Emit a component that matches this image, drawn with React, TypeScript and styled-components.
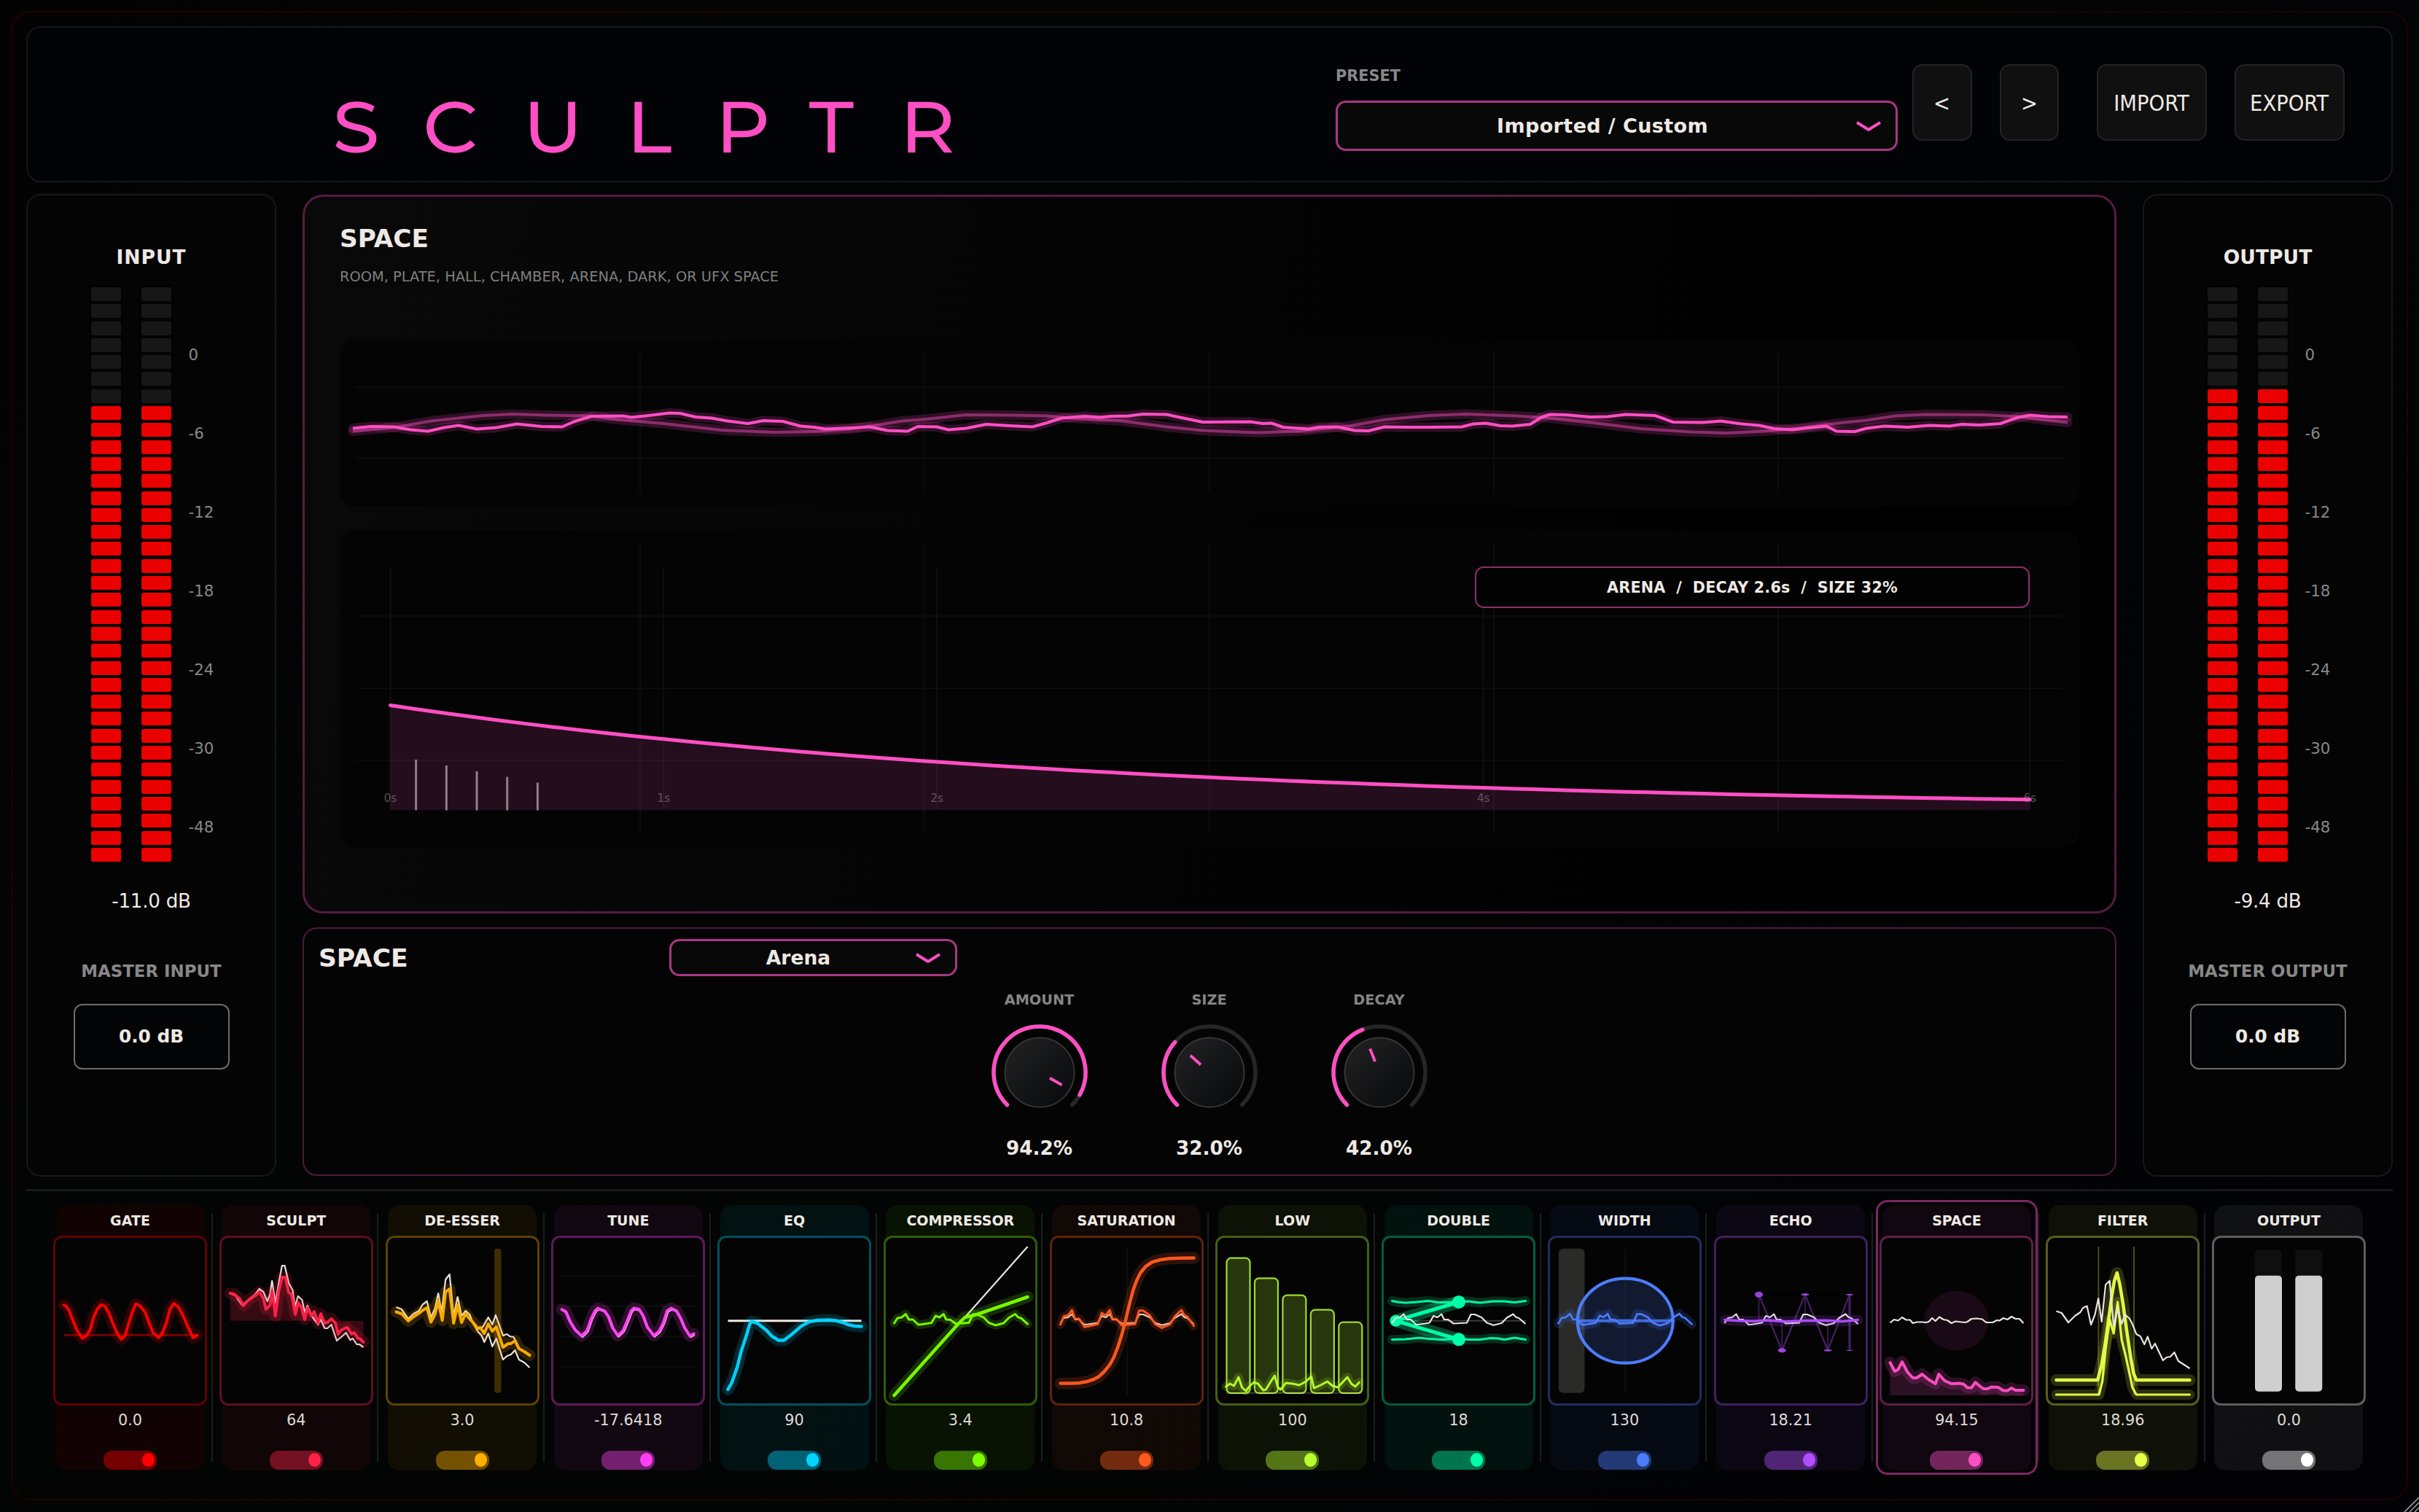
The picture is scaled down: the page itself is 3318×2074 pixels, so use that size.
import React from "react";
import styled, { createGlobalStyle } from "styled-components";

const PINK = "#ff4fc4";
const CREAM = "#eee9e4";
const GREY = "#888888";

const Global = createGlobalStyle`
  *, *::before, *::after { box-sizing: border-box; }
  html, body { margin: 0; padding: 0; background: #030303; }
  body {
    width: 3318px;
    height: 2074px;
    overflow: hidden;
    font-family: Verdana, "DejaVu Sans", sans-serif;
    color: ${CREAM};
  }
  svg { display: block; }
`;

const Window = styled.main`
  position: relative;
  width: 3318px;
  height: 2074px;
  padding: 36px;
  background: linear-gradient(120deg, #030303, #030504 45%, #020205);
  overflow: hidden;
`;

const Frame = styled.div`
  position: absolute;
  left: 15px;
  top: 15px;
  width: 3288px;
  height: 2043px;
  border: 2px solid #200304;
  border-radius: 28px;
  pointer-events: none;
`;

const Label = styled.div<{ size: number; h: number; bold?: boolean; color?: string; ls?: number; mt?: number }>`
  height: ${(p) => p.h}px;
  line-height: ${(p) => p.h}px;
  margin-top: ${(p) => p.mt ?? 0}px;
  font-size: ${(p) => p.size}px;
  font-weight: ${(p) => (p.bold ? 700 : 400)};
  letter-spacing: ${(p) => p.ls ?? 0}px;
  color: ${(p) => p.color ?? CREAM};
  white-space: pre;
`;

/* ---------- header ---------- */

const Header = styled.header`
  display: flex;
  width: 3246px;
  height: 214px;
  border: 2px solid #171819;
  border-radius: 20px;
  background: #020306;
`;

const Logo = styled.h1`
  display: flex;
  width: 1794px;
  height: 100px;
  margin: 87px 0 0;
  padding-left: 419px;
  font-family: Montserrat, Lato, sans-serif;
  font-weight: 400;
  font-size: 95.5px;
  line-height: 99px;
  color: ${PINK};
  -webkit-text-stroke: 2.4px ${PINK};
`;

const LogoLetter = styled.span<{ w: number }>`
  flex: none;
  width: ${(p) => p.w}px;
  transform: scaleX(1.07);
  transform-origin: left;
`;

const PresetBlock = styled.div`
  width: 771px;
  padding-top: 52px;
`;

const Select = styled.div<{ w: number; h: number; shift: number; mt?: number }>`
  display: flex;
  align-items: center;
  justify-content: center;
  position: relative;
  width: ${(p) => p.w}px;
  height: ${(p) => p.h}px;
  margin-top: ${(p) => p.mt ?? 0}px;
  padding: 1px ${(p) => p.shift}px 0 0;
  border: 3px solid #a93785;
  border-radius: 14px;
  background: #080808;
`;

const Chevron = styled.svg`
  position: absolute;
  right: 19px;
  top: 50%;
  transform: translateY(-50%);
`;

const ButtonRow = styled.div`
  display: flex;
  padding: 50px 0 0 19.5px;
`;

const Button = styled.button<{ w: number; ml?: number }>`
  width: ${(p) => p.w}px;
  height: 105px;
  margin: 0 0 0 ${(p) => p.ml ?? 0}px;
  padding: 2px 0 0;
  border: 2px solid #232323;
  border-radius: 14px;
  background: #101010;
  color: ${CREAM};
  font: 400 30.5px "DejaVu Sans Condensed", "DejaVu Sans", sans-serif;
`;

/* ---------- middle ---------- */

const Middle = styled.div`
  display: flex;
  margin-top: 16px;
  height: 1348px;
`;

const SidePanel = styled.section`
  display: flex;
  flex-direction: column;
  align-items: center;
  width: 343px;
  height: 1348px;
  border: 2px solid #181818;
  border-radius: 20px;
  background: #040404;
`;

const MeterRow = styled.div`
  display: flex;
  align-self: stretch;
  height: 790px;
  margin-top: 21px;
  padding-left: 86.5px;
`;

const MeterColumn = styled.div`
  display: flex;
  flex-direction: column;
  gap: 4.31px;
  width: 41.5px;
  margin-right: 27.5px;
  box-shadow: 0 0 0 3px #020203;
`;

const Segment = styled.div<{ on: boolean }>`
  height: 19px;
  border-radius: 3px;
  background: ${(p) => (p.on ? "#eb0000" : "#171717")};
`;

const Scale = styled.div`
  display: flex;
  flex-direction: column;
  padding-top: 38.5px;
  margin-left: -4px;
`;

const GainBox = styled.div`
  display: flex;
  align-items: center;
  justify-content: center;
  width: 214px;
  height: 90px;
  margin-top: 31px;
  border: 2px solid #6c6c6c;
  border-radius: 12px;
  background: #030406;
`;

const Center = styled.div`
  display: flex;
  flex-direction: column;
  width: 2488px;
  margin: 1px 36px 0;
`;

const Display = styled.section`
  height: 986px;
  padding: 32px 48px 0;
  border: 3px solid #571b44;
  border-radius: 28px;
  background: linear-gradient(100deg, #090909, #040404 45%, #000 85%);
`;

const Plot = styled.div<{ h: number; mt: number }>`
  height: ${(p) => p.h}px;
  margin-top: ${(p) => p.mt}px;
  border-radius: 20px;
  background: #040404;
`;

const PlotStack = styled(Plot)`
  position: relative;
`;

const Badge = styled.div`
  position: absolute;
  left: 1557px;
  top: 50px;
  width: 761px;
  height: 57px;
  display: flex;
  align-items: center;
  justify-content: center;
  border: 2px solid #8a2e6d;
  border-radius: 12px;
  background: #020202;
`;

const Controls = styled.section`
  height: 341px;
  margin-top: 19px;
  border: 2px solid #50193f;
  border-radius: 20px;
  background: #040404;
`;

const ControlsHead = styled.div`
  display: flex;
  align-items: center;
  height: 51px;
  margin-top: 14px;
  padding-left: 20px;
`;

const HeadTitle = styled.div`
  width: 481px;
  padding-top: 1px;
`;

const Knobs = styled.div`
  display: flex;
  justify-content: center;
  margin-top: 20px;
  padding-right: 1px;
`;

const KnobCell = styled.div`
  display: flex;
  flex-direction: column;
  align-items: center;
  width: 233px;
`;

const Dial = styled.svg`
  margin-top: 18px;
`;

/* ---------- module strip ---------- */

const Strip = styled.div`
  display: flex;
  margin-top: 17px;
  padding: 12px 0 0 31.5px;
  border-top: 3px solid #191919;
`;

const Slot = styled.div`
  display: flex;
  align-items: center;
  width: 227.77px;
  height: 377px;
`;

const Divider = styled.div`
  width: 2px;
  height: 341px;
  background: #1d1d1d;
`;

const Highlight = styled.div<{ color: string; on: boolean }>`
  display: flex;
  align-items: center;
  justify-content: center;
  width: 222px;
  height: 377px;
  border-radius: 16px;
  border: 3px solid ${(p) => (p.on ? p.color + "7c" : "transparent")};
`;

const Card = styled.div<{ color: string }>`
  display: flex;
  flex-direction: column;
  align-items: center;
  width: 204px;
  height: 364px;
  border-radius: 16px;
  background: ${(p) => p.color}0f;
`;

const Preview = styled.div<{ color: string }>`
  width: 211px;
  height: 233px;
  margin-top: 7px;
  border: 3px solid ${(p) => p.color}5c;
  border-radius: 12px;
  background: #040404;
  flex: none;
  overflow: hidden;
`;

const PreviewArt = styled.svg`
  margin: -3px;
`;

const Toggle = styled.div<{ color: string }>`
  display: flex;
  align-items: center;
  justify-content: flex-end;
  width: 73px;
  height: 26px;
  margin-top: 28px;
  padding-right: 3px;
  border-radius: 12px;
  background: ${(p) => p.color}6b;
`;

const Thumb = styled.div<{ color: string }>`
  width: 17px;
  height: 19px;
  border-radius: 50%;
  background: ${(p) => p.color};
`;

const Grip = styled.svg`
  position: absolute;
  right: 0;
  bottom: 0;
`;

/* ---------- drawing helpers ---------- */

type Pt = [number, number];
const parse = (s: string): Pt[] =>
  s.trim().split(/\s+/).map((p) => p.split(",").map(Number) as Pt);
const PX = (u: number) => 14.5 + 1.83 * u;
const line = (pts: Pt[]) => pts.map(([x, y]) => `${x},${y}`).join(" ");
const scope = (s: string) => line(parse(s).map(([u, y]) => [PX(u), y]));

const Glow = ({ pts, color, w = 4, glow = 16 }: { pts: string; color: string; w?: number; glow?: number }) => (
  <g fill="none" stroke={color} strokeLinejoin="round" strokeLinecap="round">
    <polyline points={pts} strokeWidth={glow} opacity={0.17} />
    <polyline points={pts} strokeWidth={w} opacity={0.97} />
  </g>
);
const Thin = ({ pts, w = 2.2 }: { pts: string; w?: number }) => (
  <polyline points={pts} fill="none" stroke="#e9e4df" strokeWidth={w} strokeLinejoin="round" />
);

const VOICE =
  "0,120 2.5,113 5.7,112 8.7,107.5 11,115 14,115 18,122 21,121.5 28,119.5 31,110 34,112 37,107.5 39,115 42,115.2 46,120.5 56,119.5 59,108 62,108 67,112 71,119.5 76,122.8 82,120 86,112.5 90.7,107.5 93,112 95,113 100,121";
const voice = (k = 1) => line(parse(VOICE).map(([u, y]) => [PX(u), 116.7 + (y - 116.7) * k]));

const SPECTRUM =
  "0,103.5 4,106 9,119 14,110 18,105 20,99 23,96.5 26,122 29,108 31.5,86 34,118 37,67 40,62 43,124 46,100 49,121 51.5,108 55,114 57,121 60,135 63,138 66,149 68.5,138.5 71.5,155 74,148 80,171 82.5,167 85.5,166 88.5,160 91.5,172 95,176 100,182";

const art: Record<string, (c: string) => React.ReactNode> = {
  gate: (c) => (
    <>
      <line x1={14.5} x2={197.5} y1={136.3} y2={136.3} stroke={c} strokeWidth={3} opacity={0.45} />
      <Glow color={c} pts={scope("0,95 2,97 4,103 7,117 10,130 14,141 17,137 20,128 22,114 25,101 28,94.5 31,97 34,107 37,121 40,134 43,142 46,137 48.5,121 51.5,104 54,93.5 57,96 61,105 64,120 67,133 71,140 74,133 77,119 79.5,101 82.5,93 86,98 89,108 93,125 97,140 100,136.5")} />
    </>
  ),
  sculpt: (c) => {
    const main = "0,79 3,80 7,86 10,96 14,88 19,82 22,77 25,86 27,101 30,95 31.5,76 34,110 36.5,76 39,57 41.5,57 44,78 46,80 49,108 51,92 53.5,98 56,115 58,99 61,110 63,104 66,120 68,107 71,120 73,119 76,114 79,120 81,135 83,130 86,127 88,126 91,135 93,133 96,141 97,141 100,146";
    return (
      <>
        <polygon points={`${scope("0,116.7 " + main + " 100,116.7")}`} fill={c} opacity={0.2} />
        <Thin pts={scope("0,79 4,82 9,95 13,89 19,80 22,73 25,77 28,90 30,80 31.5,62 34,92 37,60 39,41 41,41 44,65 47,75 48.5,98 51,83 54,88 56,105 58,96 62,112 66,122 68,115 71,127 73,127 76,122 80,144 84,138 87,133 90,143 92,141 95,149 97,149 100,153")} />
        <Glow color={c} pts={scope(main)} />
      </>
    );
  },
  deesser: (c) => (
    <>
      <rect x={149} y={17.7} width={9.5} height={198} rx={4} fill={c} opacity={0.23} />
      <Thin pts={scope("0,98 4,101 9,114 13,107 17,103 20,94 23,90 26,112 29,100 31.5,79 34,105 37,60 40,53 43,110 46,84 49,110 52,103 55,108 58,122 62,128 65,125 69,112 72,122 74.5,109 80,137 83,135 85,138 88,139 91,150")} />
      <Thin pts={scope("58,121 61,131 64,137 66,146 69,134 72,152 75,141 80,170 83,165 86,163 89,157 92,170 96,174 100,181")} />
      <Glow color={c} pts={scope("0,104.5 4,107 9,117 14,110 18,105 20,102 23,99 26,118.5 29,108 31.5,90 34.5,116 37,77 40,73 43,120 46,95 49,119 52,107 55,114 58,120 61,127 63,126 66,134 69,121 72,131 75,125 80,153 84,148 86,148 89,144 92,155 96,159 100,164")} />
    </>
  ),
  tune: (c) => {
    const w = "0,101 3,104 6,117 10,129 15,137.5 19,130 22,114 25,103 27,99.5 32,103 35,111 38,126 42,137 46,130 49,117 52,103 54,99.5 58,101 61,110 64,125 69,137 73,131 76,120 79,103 82,99.5 86,103 89,113 92,126 96,137.5 99,134.5";
    return (
      <>
        {[55.7, 97, 138.7, 180].map((y) => (
          <line key={y} x1={12} x2={199} y1={y} y2={y} stroke="#0d0d0d" strokeWidth={2} />
        ))}
        <g transform="translate(1 1.2)"><Thin pts={scope(w)} w={3} /></g>
        <Glow color={c} pts={scope(w)} />
      </>
    );
  },
  eq: (c) => (
    <>
      <line x1={14.5} x2={197.5} y1={116.7} y2={116.7} stroke={CREAM} strokeWidth={3} />
      <Glow color={c} w={4.5} pts={scope("0,211 3,201 7,180 10,158 14,136 16,123 17.5,117.5 22,120 29,130 33,138 38,143.5 42,143.5 48,135 55,124 61,118 67,116 76,115.5 81,116.5 86,119 90,122 95,124 100,124.5")} />
    </>
  ),
  compressor: (c) => (
    <>
      <Thin pts={scope("53,112 100,15")} />
      <Glow color={c} w={4.5} pts={scope("0,219 48,121 53,112 62,108 100,84")} />
      <Glow color={c} w={3} glow={12} pts={voice()} />
    </>
  ),
  saturation: (c) => (
    <>
      <line x1={106} x2={106} y1={15} y2={219} stroke="#0e0e0e" strokeWidth={2} />
      <line x1={14} x2={198} y1={116.7} y2={116.7} stroke="#0e0e0e" strokeWidth={2} />
      <Thin pts={voice()} />
      <Glow color={c} w={3} glow={12} pts={voice(1.6)} />
      <Glow color={c} w={4.5} pts={scope("0,202.5 8,202.5 14,202 20,200 25,197 29,193 33,186 37,177 40,167 43,153 46,136 49,115 52,92 54.5,75 57,62 60,51 64,42 69,36 75,33 82,31.3 90,30.7 100,30.5")} />
    </>
  ),
  low: (c) => (
    <>
      {[29.7, 57.3, 80.7, 100.7, 117.7].map((y, i) => (
        <rect key={y} x={15.5 + i * 38.45} y={y + 1} width={32} height={215 - y} rx={6} fill={c} fillOpacity={0.2} stroke={c} strokeOpacity={0.85} strokeWidth={2.2} />
      ))}
      <line x1={15} x2={201} y1={215.7} y2={215.7} stroke="#ffffff" opacity={0.22} strokeWidth={2} />
      <Glow color={c} w={3} glow={12} pts={scope("0,207 3,203 6,206 9.5,194 12,208 15,213 18,206 21,201 24,203 28,212 30,211 33,202 36.5,192 39,208 41,211 45,202 50,203 55,205 60,200 64,193 66,209 71,205 76,200 80,206 84,208 88,200 91,194 94,203 97,207 100,201")} />
    </>
  ),
  double: (c) => (
    <>
      <line x1={45} x2={198} y1={116.7} y2={116.7} stroke="#3a3a3a" strokeWidth={2} />
      <Glow color={c} w={3} glow={13} pts={scope("0,89.5 4,91 10,92 18,91 27,89.5 35,91.5 50,91 57,90 66,92 76,90 84,90 92,91.5 100,89.5")} />
      <Glow color={c} w={3} glow={13} pts={scope("0,142.5 10,142 20,140 28,141.5 36,142.5 50,141.5 58,142.5 66,142.5 74,140.5 80,141 84,142.5 92,140 100,142.5")} />
      {[91, 142.3].map((y) => (
        <g key={y} stroke={c} fill={c}>
          <line x1={19.3} y1={116.7} x2={106} y2={y} strokeWidth={17} opacity={0.27} />
          <line x1={19.3} y1={116.7} x2={106} y2={y} strokeWidth={5} />
          <circle cx={106} cy={y} r={9} stroke="none" />
        </g>
      ))}
      <circle cx={19.3} cy={116.7} r={8} fill={c} />
      <Thin pts={voice()} />
    </>
  ),
  width: (c) => (
    <>
      <rect x={15} y={17.7} width={35.5} height={198} rx={6} fill="#2a2a29" />
      <line x1={106} x2={106} y1={17.7} y2={215.7} stroke="#0d0d0d" strokeWidth={2} />
      <ellipse cx={106.3} cy={116.7} rx={65.5} ry={58} fill={c} fillOpacity={0.18} stroke={c} strokeWidth={4.2} />
      <line x1={41} x2={172} y1={116.7} y2={116.7} stroke={c} strokeWidth={4} opacity={0.8} />
      <Glow color={c} w={2.8} glow={13} pts={voice(1.05)} />
    </>
  ),
  echo: (c) => (
    <>
      <g stroke={c} fill="none" opacity={0.38} strokeWidth={2.2}>
        <polyline points="61.5,80.7 93.2,157.3 124.9,80.7 156,157.3 186,80.7 186,157.3" />
        <path d="M61.5 80.7V116 M93.2 157.3V116 M124.9 80.7V116 M156 157.3V116" opacity={0.7} />
        <path d="M186 80.7V157.3" strokeWidth={3} />
      </g>
      <g fill={c} opacity={0.85}>
        <ellipse cx={61.5} cy={80.7} rx={5.5} ry={4} />
        <ellipse cx={93.2} cy={157.3} rx={5.5} ry={3} />
        <ellipse cx={124.9} cy={80.7} rx={5.5} ry={1.4} />
        <ellipse cx={156} cy={157.3} rx={5.5} ry={1.2} />
        <ellipse cx={186} cy={80.7} rx={5} ry={1} />
        <ellipse cx={186} cy={157.3} rx={5} ry={0.6} />
      </g>
      <Thin pts={voice()} />
      <Glow color={c} w={3.4} glow={14} pts={scope("0,115.5 12,116.8 22,117.3 32,116 46,117.8 62,116.5 76,116.2 88,117.5 100,115.5")} />
    </>
  ),
  space: (c) => {
    const d = "0,174 3.5,186 6,183.5 9,173 13,187 17,195 20,195 24,190 29,197.5 34,203 36.5,190 41,199 46,203 52,202.5 55,203.5 58,208.5 61,208.5 64,201 67,206 70,210 73,210 76,207.5 81,208 85,212.5 88,212.5 91,209 94,212 100,212";
    return (
      <>
        <ellipse cx={105.7} cy={116.7} rx={44} ry={41} fill={c} opacity={0.09} />
        <polygon points={scope("0,219 " + d + " 100,219")} fill={c} opacity={0.16} />
        <Thin pts={scope("0,119.5 3,115 6,116.5 9,112 12,115.5 15,115.5 17,120 20,118.5 24,118.5 27,119 29,118 31.5,113 34,117 37,111.5 40,115 43,116 46,120 49,117.5 56,119 58,118 61,114 65,113.5 69,114.5 72,119 77,119 80,116 82,116.5 85,113 88,115 91,111 94,114 97,114 100,120")} />
        <Glow color={c} pts={scope(d)} />
      </>
    );
  },
  filter: (c) => (
    <>
      <line x1={72.4} x2={72.4} y1={15} y2={219} stroke={c} opacity={0.3} strokeWidth={2} />
      <line x1={121} x2={121} y1={15} y2={219} stroke={c} opacity={0.3} strokeWidth={2} />
      <Glow color={c} w={4.5} pts={scope("0,198 31,198 34,177 36.5,150 39,118 41.5,84 43.5,62 45.5,51 47.5,66 50,93 53,133 56,170 58,189 60,198 100,198")} />
      <Glow color={c} w={3.2} glow={14} pts={scope("0,218 32,218 34.5,200 37,155 40,115 43,134 46,91 49,143 52,165 55,190 57,208 60,218 100,218")} />
      <Thin pts={scope(SPECTRUM)} />
    </>
  ),
  output: () => (
    <>
      {[59, 114.3].map((x) => (
        <g key={x}>
          <rect x={x} y={19.3} width={37} height={194.4} rx={5} fill="#0f0f0f" />
          <rect x={x} y={54.7} width={37} height={159} rx={5} fill="#cfcfcf" />
        </g>
      ))}
    </>
  ),
};

const modules = [
  { name: "GATE", value: "0.0", color: "#ff0000", kind: "gate" },
  { name: "SCULPT", value: "64", color: "#ff2248", kind: "sculpt" },
  { name: "DE-ESSER", value: "3.0", color: "#ffb000", kind: "deesser" },
  { name: "TUNE", value: "-17.6418", color: "#ff40f5", kind: "tune" },
  { name: "EQ", value: "90", color: "#00d5ff", kind: "eq" },
  { name: "COMPRESSOR", value: "3.4", color: "#7cff00", kind: "compressor" },
  { name: "SATURATION", value: "10.8", color: "#ff5a1f", kind: "saturation" },
  { name: "LOW", value: "100", color: "#b8ff30", kind: "low" },
  { name: "DOUBLE", value: "18", color: "#00ffa8", kind: "double" },
  { name: "WIDTH", value: "130", color: "#4c7dff", kind: "width" },
  { name: "ECHO", value: "18.21", color: "#b04fff", kind: "echo" },
  { name: "SPACE", value: "94.15", color: "#ff4fc4", kind: "space" },
  { name: "FILTER", value: "18.96", color: "#e8ff48", kind: "filter" },
  { name: "OUTPUT", value: "0.0", color: "#ffffff", kind: "output" },
];

/* ---------- parts ---------- */

const Arrow = () => (
  <Chevron width={36} height={16} viewBox="0 0 36 16">
    <path d="M2 3 L18 13 L34 3" fill="none" stroke={PINK} strokeWidth={4} />
  </Chevron>
);

const Side = ({ title, off, level, master, ls }: { title: string; off: number; level: string; master: string; ls: number }) => (
  <SidePanel>
    <Label size={26.6} h={40} bold mt={65} ls={ls}>{title}</Label>
    <MeterRow>
      {[0, 1].map((c) => (
        <MeterColumn key={c}>
          {Array.from({ length: 34 }, (_, i) => <Segment key={i} on={i >= off} />)}
        </MeterColumn>
      ))}
      <Scale>
        {["0", "-6", "-12", "-18", "-24", "-30", "-48"].map((t) => (
          <Label key={t} size={21.3} h={108} color={GREY}>{t}</Label>
        ))}
      </Scale>
    </MeterRow>
    <Label size={26.2} h={32} mt={36} ls={-0.3}>{level}</Label>
    <Label size={22.9} h={28} bold mt={66} color={GREY}>{master}</Label>
    <GainBox><Label size={24.8} h={32} bold>0.0 dB</Label></GainBox>
  </SidePanel>
);

const polar = (deg: number, r: number) => {
  const a = (deg * Math.PI) / 180;
  return `${68 + r * Math.sin(a)} ${68 - r * Math.cos(a)}`;
};

const Knob = ({ name, v, id }: { name: string; v: number; id: string }) => {
  const end = -135 + 270 * v;
  return (
    <KnobCell>
      <Label size={19.3} h={26} bold color="#858585">{name}</Label>
      <Dial width={136} height={136} viewBox="0 0 136 136">
        <defs>
          <linearGradient id={id} x1="0" y1="0" x2="1" y2="1">
            <stop offset="0.1" stopColor="#202020" />
            <stop offset="0.9" stopColor="#090b0e" />
          </linearGradient>
        </defs>
        <g fill="none" strokeWidth={5.5} strokeLinecap="round">
          <path d={`M${polar(-135, 63)} A63 63 0 1 1 ${polar(135, 63)}`} stroke="#262626" />
          <path d={`M${polar(-135, 63)} A63 63 0 ${v > 0.667 ? 1 : 0} 1 ${polar(end, 63)}`} stroke={PINK} />
        </g>
        <circle cx={68} cy={68} r={47.5} fill={`url(#${id})`} stroke="#353535" strokeWidth={2} />
        <path d={`M${polar(end, 16)} L${polar(end, 35)}`} stroke={PINK} strokeWidth={4} />
      </Dial>
      <Label size={26.2} h={32} bold mt={20}>{(v * 100).toFixed(1)}%</Label>
    </KnobCell>
  );
};

const MAIN =
  "484,587 508,584.5 540,585 563,589 587,591 609,586 629,583 654,588 681,586 709,581 743,584.5 771,585 787,578 811,570.5 854,570 866,572 894,569 918,566 933,566.5 954,571.5 976,573 998,577 1026,580.5 1047,576.5 1074,577.5 1098,584 1117,585.5 1132,588 1169,586.5 1193,585 1217,590 1245,591 1259,584.5 1285,585 1301,589 1325,587 1353,581.5 1385,583.5 1416,585 1436,579.5 1456,573 1488,570.5 1508,572 1524,570.5 1548,570 1568,567.5 1600,568 1616,571.5 1650,578.5 1715,578 1732,580.5 1744,580 1760,585.5 1795,588 1809,585.5 1834,585 1858,590 1877,590.5 1899,585 1928,585.5 1964,585.5 2005,585 2021,581 2038,580 2058,583.5 2074,584 2099,581.5 2114,572 2126,568 2148,568.5 2181,571.5 2205,571 2230,568 2270,569.5 2295,578.5 2336,579 2360,577 2389,581 2413,583 2434,587.5 2458,589 2479,586.5 2505,584 2519,591 2544,591.5 2560,587 2585,584 2617,585.5 2646,583 2674,584 2691,581.5 2715,582.5 2744,580.5 2768,572 2785,569 2809,571 2836,571.5";
const SLOW =
  "484,591 543,585.5 591,577 663,569.5 703,567.5 751,569 811,570 846,575 910,580.5 990,589.5 1062,592.5 1117,591.5 1165,588 1197,583.5 1237,577 1269,574.5 1325,568.5 1388,569 1436,570 1468,573 1540,577 1600,585 1650,590 1725,593 1780,591 1850,584 1900,575 1960,569.5 2010,567.5 2080,570 2120,572.5 2190,580 2250,587.5 2320,592 2368,593.5 2420,591 2470,586.5 2520,580 2560,576 2600,570 2640,568 2720,568.5 2770,571 2800,575 2836,579";

const T0 = 69.5;
const TS = 374.8;
const decay = Array.from({ length: 61 }, (_, i): Pt => {
  const t = i / 10;
  return [T0 + TS * t, 383.5 - 143 * Math.exp(-0.391 * t)];
});

const WavePlot = () => (
  <svg width={2386} height={229} viewBox="466 465.5 2386 229">
    <g stroke="#0c0c0c" strokeWidth={2}>
      {[878, 1268, 1659, 2049, 2439].map((x) => <line key={x} x1={x} x2={x} y1={484} y2={676} />)}
      {[530.6, 627.6].map((y) => <line key={y} x1={488} x2={2829} y1={y} y2={y} />)}
    </g>
    <g fill="none" stroke={PINK} strokeLinejoin="round">
      <polyline points={SLOW} strokeWidth={13} opacity={0.17} strokeLinecap="round" />
      <polyline points={SLOW} strokeWidth={4} opacity={0.45} />
      <polyline points={MAIN} strokeWidth={13} opacity={0.17} strokeLinecap="round" />
      <polyline points={MAIN} strokeWidth={4} />
    </g>
  </svg>
);

const TimeText = styled.text`
  font: 400 15px "DejaVu Sans", sans-serif;
  text-anchor: middle;
  fill: #fff;
  opacity: 0.3;
`;

const DecayPlot = () => (
  <svg width={2386} height={435} viewBox="0 0 2386 435">
    <g stroke="#0c0c0c" strokeWidth={2}>
      {[412, 802, 1193, 1583, 1973].map((x) => <line key={x} x1={x} x2={x} y1={18} y2={417} />)}
      {[118, 217, 316].map((y) => <line key={y} x1={22} x2={2363} y1={y} y2={y} />)}
    </g>
    {[0, 1, 2, 4, 6].map((t) => (
      <g key={t}>
        <line x1={T0 + TS * t} x2={T0 + TS * t} y1={50} y2={384} stroke="#0f0f0f" strokeWidth={2} />
        <TimeText x={T0 + TS * t} y={373}>{t}s</TimeText>
      </g>
    ))}
    <polygon points={line([[T0, 384], ...decay, [T0 + TS * 6, 384]])} fill={PINK} opacity={0.13} />
    {[0, 1, 2, 3, 4].map((i) => (
      <line key={i} x1={104.6 + i * 41.7} x2={104.6 + i * 41.7} y1={315 + i * 7.9} y2={384.5} stroke="#fff" strokeWidth={3} opacity={0.48} />
    ))}
    <polyline points={line(decay)} fill="none" stroke={PINK} strokeWidth={5} strokeLinecap="round" />
  </svg>
);

const logo: [string, number][] = [["S", 124], ["C", 136.5], ["U", 142], ["L", 122], ["P", 129], ["T", 124], ["R", 90]];

export default function App() {
  return (
    <>
      <Global />
      <Window>
        <Frame />
        <Header>
          <Logo>
            {logo.map(([ch, w]) => <LogoLetter key={ch} w={w}>{ch}</LogoLetter>)}
          </Logo>
          <PresetBlock>
            <Label size={20.8} h={28} bold color={GREY}>PRESET</Label>
            <Select w={771} h={69} shift={39} mt={20}>
              <Label size={27} h={34} bold ls={0.4}>Imported / Custom</Label>
              <Arrow />
            </Select>
          </PresetBlock>
          <ButtonRow>
            <Button w={82}>&lt;</Button>
            <Button w={81} ml={38.5}>&gt;</Button>
            <Button w={151} ml={51.5}>IMPORT</Button>
            <Button w={151} ml={38}>EXPORT</Button>
          </ButtonRow>
        </Header>

        <Middle>
          <Side title="INPUT" off={7} level="-11.0 dB" master="MASTER INPUT" ls={0.9} />
          <Center>
            <Display>
              <Label size={34.3} h={50} bold>SPACE</Label>
              <Label size={19.4} h={26} mt={15} color="#7f7f7f">ROOM, PLATE, HALL, CHAMBER, ARENA, DARK, OR UFX SPACE</Label>
              <Plot h={229} mt={73}><WavePlot /></Plot>
              <PlotStack h={435} mt={32}>
                <DecayPlot />
                <Badge><Label size={20.7} h={26} bold ls={0.2}>{"ARENA  /  DECAY 2.6s  /  SIZE 32%"}</Label></Badge>
              </PlotStack>
            </Display>
            <Controls>
              <ControlsHead>
                <HeadTitle><Label size={34.5} h={50} bold>SPACE</Label></HeadTitle>
                <Select w={395} h={51} shift={41}>
                  <Label size={26.5} h={32} bold>Arena</Label>
                  <Arrow />
                </Select>
              </ControlsHead>
              <Knobs>
                <Knob id="k1" name="AMOUNT" v={0.942} />
                <Knob id="k2" name="SIZE" v={0.32} />
                <Knob id="k3" name="DECAY" v={0.42} />
              </Knobs>
            </Controls>
          </Center>
          <Side title="OUTPUT" off={6} level="-9.4 dB" master="MASTER OUTPUT" ls={0} />
        </Middle>

        <Strip>
          {modules.map((m, i) => (
            <Slot key={m.name + i}>
              <Highlight color={m.color} on={m.kind === "space"}>
                <Card color={m.color}>
                  <Label size={19} h={28} bold mt={7}>{m.name}</Label>
                  <Preview color={m.color}>
                    <PreviewArt width={211} height={233} viewBox="0 0 211 233">{art[m.kind](m.color)}</PreviewArt>
                  </Preview>
                  <Label size={20.8} h={28} mt={6} color="#dedad6">{m.value}</Label>
                  <Toggle color={m.color}><Thumb color={m.color} /></Toggle>
                </Card>
              </Highlight>
              {i < modules.length - 1 && <Divider />}
            </Slot>
          ))}
        </Strip>

        <Grip width={22} height={22} viewBox="0 0 22 22">
          <path d="M2 22 L22 2 M9 22 L22 9 M16 22 L22 16" stroke="#9a9a9a" strokeWidth={1.6} fill="none" />
        </Grip>
      </Window>
    </>
  );
}
